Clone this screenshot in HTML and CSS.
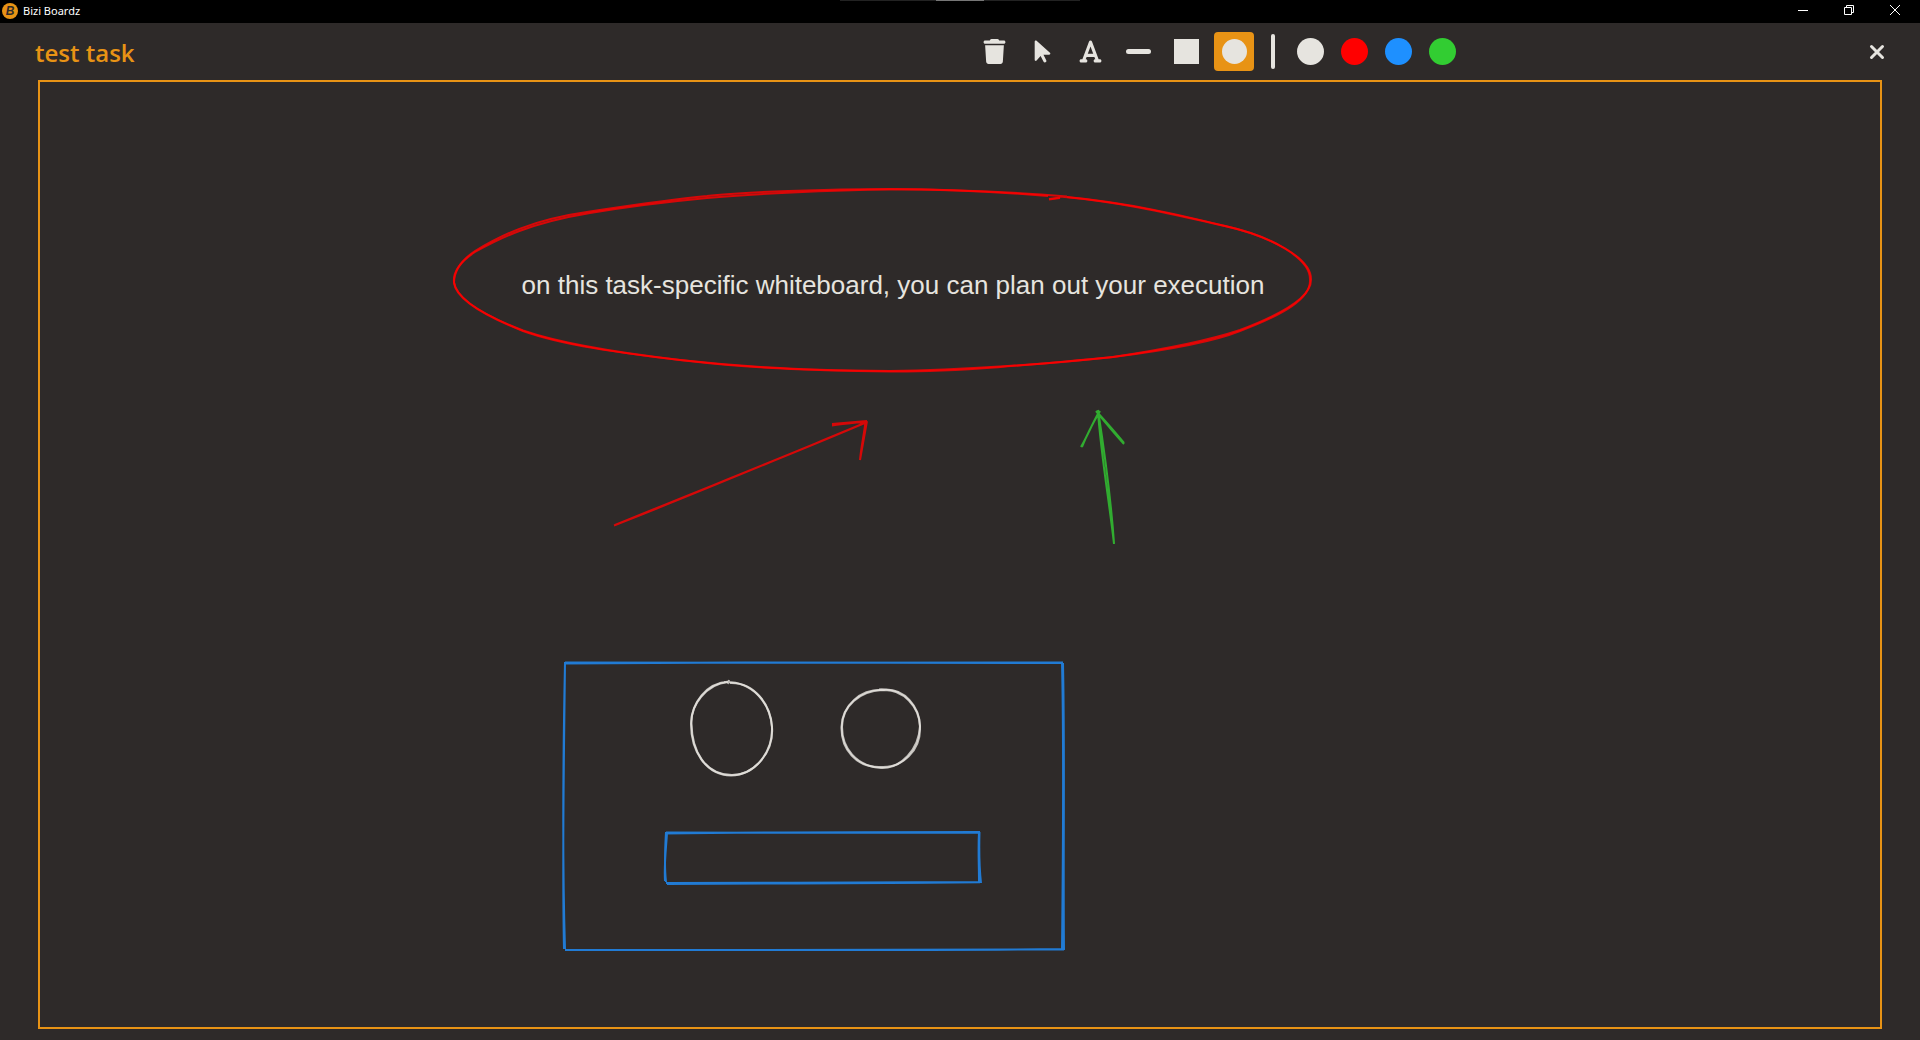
FILE: index.html
```html
<!DOCTYPE html>
<html lang="en">
<head>
<meta charset="utf-8">
<title>Bizi Boardz</title>
<link rel="stylesheet" href="styles.css">
</head>
<body>
<div class="titlebar">
  <div class="grip"></div>
  <svg class="logo" viewBox="0 0 16 16" aria-hidden="true">
    <circle cx="8" cy="8" r="8"/>
    <text x="8" y="12" text-anchor="middle">B</text>
  </svg>
  <span class="app-name">Bizi Boardz</span>
  <div class="window-controls">
    <button type="button" aria-label="Minimize"><svg viewBox="0 0 10 10"><path d="M0 5.500H10"/></svg></button>
    <button type="button" aria-label="Restore"><svg viewBox="0 0 10 10"><path d="M.5 2.500H7.500V9.500H.5ZM2.500 2.500V.5H9.500V7.500H7.500"/></svg></button>
    <button type="button" aria-label="Close window"><svg viewBox="0 0 10 10"><path d="M0 0 10 10M10 0 0 10"/></svg></button>
  </div>
</div>

<header class="header">
  <h1>test task</h1>
  <div class="toolbar">
    <div class="tools">
      <button type="button" class="tool" aria-label="Delete"><svg viewBox="-32 0 512 512"><path d="M135.200 17.700C140.600 6.800 151.700 0 163.800 0H284.200c12.100 0 23.200 6.800 28.600 17.700L320 32h96c17.700 0 32 14.300 32 32s-14.300 32-32 32H32C14.300 96 0 81.700 0 64S14.300 32 32 32h96zM53.200 467 32 128H416L394.800 467c-1.600 25.300-22.600 45-47.900 45H101.100c-25.300 0-46.300-19.700-47.900-45z"/></svg></button>
      <button type="button" class="tool" aria-label="Select"><svg viewBox="-96 0 512 512"><path d="M0 55.200V426c0 12.200 9.900 22 22 22 6.300 0 12.400-2.700 16.600-7.500L121.200 346l58.100 116.300c7.900 15.800 27.100 22.200 42.900 14.300s22.200-27.100 14.300-42.900L179.800 320H297.900c12.200 0 22.100-9.900 22.100-22.100 0-6.300-2.700-12.300-7.300-16.500L38.600 37.900C34.300 34.100 28.900 32 23.200 32 10.400 32 0 42.400 0 55.200z"/></svg></button>
      <button type="button" class="tool" aria-label="Text"><svg viewBox="-32 0 512 512"><path d="M254 52.800C249.300 40.300 237.300 32 224 32s-25.300 8.300-30 20.800L57.800 416H32c-17.700 0-32 14.300-32 32s14.300 32 32 32h96c17.700 0 32-14.300 32-32s-14.300-32-32-32h-1.800l18-48H303.800l18 48H320c-17.700 0-32 14.300-32 32s14.300 32 32 32h96c17.700 0 32-14.300 32-32s-14.300-32-32-32H390.200L254 52.800zM279.800 304H168.200L224 155.100 279.800 304z"/></svg></button>
      <button type="button" class="tool" aria-label="Line"><svg viewBox="0 0 25 25"><rect y="10" width="25" height="5" rx="2.500"/></svg></button>
      <button type="button" class="tool" aria-label="Rectangle"><svg viewBox="0 0 25 25"><rect width="25" height="25"/></svg></button>
      <button type="button" class="tool active" aria-label="Ellipse" aria-pressed="true"><svg viewBox="0 0 25 25"><circle cx="12.500" cy="12.500" r="12.500"/></svg></button>
    </div>
    <div class="divider"></div>
    <div class="swatches">
      <button type="button" class="swatch white" aria-label="White"></button>
      <button type="button" class="swatch red" aria-label="Red"></button>
      <button type="button" class="swatch blue" aria-label="Blue"></button>
      <button type="button" class="swatch green" aria-label="Green"></button>
    </div>
  </div>
  <button type="button" class="close" aria-label="Close board"><svg viewBox="0 0 16 16"><path d="M2.500 2.500 13.500 13.500M13.500 2.500 2.500 13.500"/></svg></button>
</header>

<main class="board">
  <svg class="canvas" aria-label="Whiteboard">
    <g transform="translate(-40 -82)">
      <g class="stroke red-ink">
        <path d="M1049 199 1060 197.500M1048 196C1000 192 940 189 890 189C830 189 740 192 707 196C665 200 620 207 590 211.500C530 220 500 236 475 251C460 261 454 272 454 283C456 298 483 315 523 331C562 345 620 353 680 360C740 367 780 370 890 371C960 370 1050 364 1113 357C1160 351 1210 343 1240 331C1285 314 1311 298 1310 280C1311 258 1270 236 1225 226C1180 215 1130 203 1067 197"/>
        <path d="M1060 198 1049 199.500M1067 196.500C1010 192 950 189 890 189.500C830 190 750 194 707 198C665 202 620 208 590 213C530 223 500 238 475 252C460 262 453 272 454 282C456 298 483 315 523 330.500C562 344 620 353 680 360C740 366.500 800 371 890 371.500C960 372 1050 363 1113 357C1160 350 1210 340 1240 330C1285 313 1311 296 1311 280C1312 258 1270 236 1225 226C1180 216 1130 203 1060 196.500"/>
        <path d="M614 525.500C690 496 785 456 866 422.500M615 525C700 490 790 455 867 422M832 424 867 421M832 425.500C845 424 856 422 866 422M867 421 860 460M865.500 422C864 434 861 448 860 460"/>
      </g>
      <g class="stroke green-ink">
        <path d="M1114 544C1109 500 1101 455 1098 412M1114 543C1111 500 1105 455 1098 410M1082 447C1087 434 1093 423 1100 411M1081 447C1088 435 1092 424 1099 412M1096 411C1105 422 1115 434 1124 444M1097 412C1107 423 1115 432 1124 443"/>
      </g>
      <g class="stroke blue-ink">
        <path d="M564 663.500C730 662 900 662.500 1063 663M565 662.500C730 662.500 900 663.500 1063 662.500M1062 662C1064 750 1063 860 1062 949M1063 663C1065 760 1063 850 1064 950M1064 949.500C890 949 730 950.500 565 950M1063 949C890 951 730 949.500 566 950M565 949C562 850 563 760 565 662M564 949C562 860 564 760 565 663"/>
        <path d="M665 833.500C770 832 870 832 980 832M666 832.500C770 833 870 832.500 979 832.500M979 832C978 850 979 865 979 882M979.500 832C979 850 979 865 981 883M981 882C880 882 770 883 666 883M980 882.500C880 883 770 883.500 667 884M666 882C664 865 665 850 666 832M665 881C664 864 666 850 667 833"/>
      </g>
      <g class="stroke white-ink">
        <path d="M728 684 729 680M724 682C754 681 770 704 772 727C774 752 755 775 731 775.500C705 775 691 750 691 724C692 702 706 683 729 681.500"/>
        <path d="M730 683C755 682 771 706 772 727C773 752 755 775 732 775C705 775 692 751 691.500 724C690 706 706 684 728 682"/>
        <path d="M880 690C905 686 920 708 920 727C921 751 902 768 881 767C856 768 841 749 841.500 727C842 706 860 688 885 690"/>
        <path d="M879 689.500C905 688 919 708 920 726C919 749 901 769 881 768C856 766 842 748 842 727C842 706 860 691 882 690Q893 690 899 693"/>
      </g>
      <text class="note" x="893" y="294" text-anchor="middle">on this task-specific whiteboard, you can plan out your execution</text>
    </g>
  </svg>
</main>
</body>
</html>
```
FILE: styles.css
```css
* {
  box-sizing: border-box;
}

body {
  margin: 0;
  min-height: 100vh;
  display: flex;
  flex-direction: column;
  background: #2e2a29;
  color: #e6e4df;
  font-family: "Open Sans", "Noto Sans", sans-serif;
}

button {
  border: 0;
  padding: 0;
  background: none;
  color: inherit;
  display: flex;
  align-items: center;
  justify-content: center;
}

.titlebar {
  position: relative;
  display: flex;
  align-items: center;
  height: 23px;
  padding: 0 2px 1px;
  background: #000;
  color: #fff;
}

.grip {
  position: absolute;
  top: 0;
  left: 50%;
  width: 240px;
  height: 1px;
  transform: translateX(-50%);
  background: linear-gradient(to right, #222 40%, #777 40% 60%, #222 60%);
}

.logo {
  width: 16px;
  height: 16px;
  fill: #e89315;
}

.logo text {
  fill: #2e2a29;
  font: italic bold 12px "Liberation Sans", sans-serif;
}

.app-name {
  margin-left: 5px;
  font-family: "Noto Sans", sans-serif;
  font-size: 11px;
  line-height: 16px;
}

.window-controls {
  display: flex;
  align-self: stretch;
  margin-left: auto;
}

.window-controls button {
  width: 46px;
  padding-bottom: 2px;
}

.window-controls svg {
  width: 10px;
  height: 10px;
  fill: none;
  stroke: #fff;
}

.header {
  display: grid;
  grid-template-columns: 57fr auto 26fr;
  align-items: center;
  padding: 9px 35px;
}

h1 {
  margin: 0;
  padding-top: 2px;
  color: #e89315;
  font-size: 24px;
  font-weight: 600;
  line-height: 36px;
}

.toolbar,
.tools,
.swatches {
  display: flex;
  align-items: center;
}

.tools {
  gap: 8px;
}

.tool {
  width: 40px;
  height: 39px;
  border-radius: 4px;
}

.tool.active {
  background: #e89315;
}

.tool svg {
  width: 25px;
  height: 25px;
  fill: currentColor;
}

.divider {
  width: 4px;
  height: 35px;
  margin: 0 22px 0 17px;
  border-radius: 2px;
  background: #e6e4df;
}

.swatches {
  gap: 17px;
}

.swatch {
  width: 27px;
  height: 27px;
  border-radius: 50%;
}

.white { background: #e6e4df; }
.red { background: #f00; }
.blue { background: #1e90ff; }
.green { background: #32cd32; }

.close {
  justify-self: end;
}

.close svg {
  width: 16px;
  height: 16px;
  stroke: currentColor;
  stroke-width: 3;
  stroke-linecap: round;
}

.board {
  flex: 1;
  display: flex;
  margin: 0 38px 11px;
  border: 2px solid #e89315;
}

.canvas {
  flex: 1;
  min-height: 600px;
}

.stroke {
  fill: none;
  stroke-width: 2;
  stroke-opacity: 0.8;
}

.red-ink { stroke: #f00; }
.green-ink { stroke: #32cd32; }
.blue-ink { stroke: #1e90ff; }
.white-ink { stroke: #e6e4df; }

.note {
  fill: #e6e4df;
  font-family: "Liberation Sans", Arial, sans-serif;
  font-size: 26px;
}
```
